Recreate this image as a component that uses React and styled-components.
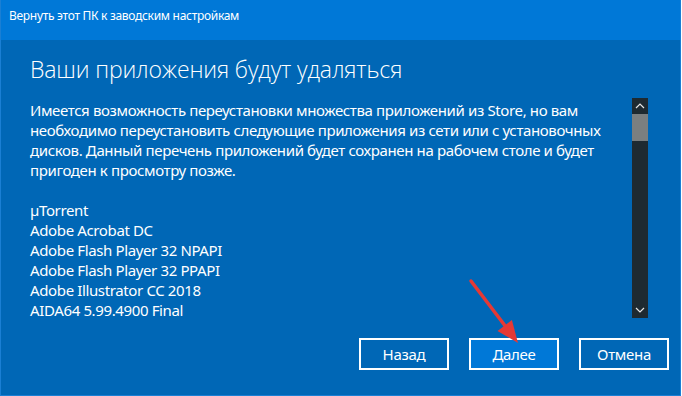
import React from 'react';
import styled, {createGlobalStyle} from 'styled-components';

const GlobalStyle = createGlobalStyle`
  html, body {
    margin: 0;
    padding: 0;
    background: #ffffff;
  }
  body {
    font-family: "Noto Sans", "Open Sans", sans-serif;
  }
`

const APPS = [
  'µTorrent',
  'Adobe Acrobat DC',
  'Adobe Flash Player 32 NPAPI',
  'Adobe Flash Player 32 PPAPI',
  'Adobe Illustrator CC 2018',
  'AIDA64 5.99.4900 Final',
];

const App = () => {
  return (
    <>
      <GlobalStyle/>
      <Window>
        <TitleBar>Вернуть этот ПК к заводским настройкам</TitleBar>
        <Body>
          <Heading>Ваши приложения будут удаляться</Heading>
          <ContentRow>
            <TextArea>
              <Paragraph>
                Имеется возможность переустановки множества приложений из Store, но вам
                необходимо переустановить следующие приложения из сети или с установочных
                дисков. Данный перечень приложений будет сохранен на рабочем столе и будет
                пригоден к просмотру позже.
              </Paragraph>
              <AppList>
                {APPS.map(name => <AppItem key={name}>{name}</AppItem>)}
              </AppList>
            </TextArea>
            <Scrollbar>
              <ScrollArrow>
                <svg width="10" height="6" viewBox="0 0 10 6">
                  <path d="M1 5 L5 1 L9 5" fill="none" stroke="#e6e6e6" strokeWidth="1.2"/>
                </svg>
              </ScrollArrow>
              <ScrollThumb/>
              <ScrollTrack/>
              <ScrollArrow>
                <svg width="10" height="6" viewBox="0 0 10 6">
                  <path d="M1 1 L5 5 L9 1" fill="none" stroke="#e6e6e6" strokeWidth="1.2"/>
                </svg>
              </ScrollArrow>
            </Scrollbar>
          </ContentRow>
          <Footer>
            <Button>Назад</Button>
            <Button primary>Далее</Button>
            <Button>Отмена</Button>
          </Footer>
          <Pointer width="60" height="70" viewBox="0 0 60 70">
            <line x1="2" y1="1" x2="37" y2="47" stroke="#e53935" strokeWidth="3.5" strokeLinecap="round"/>
            <polygon points="49,63 28.5,50.9 42.9,40.1" fill="#e53935"/>
          </Pointer>
        </Body>
      </Window>
    </>
  );
};

const Window = styled.div`
    width: 681px;
    height: 396px;
    box-sizing: border-box;
    border: 1px solid #1a7fd4;
    border-top: none;
    display: flex;
    flex-direction: column;
    background: #0067b6;
`
const TitleBar = styled.div`
    height: 40px;
    flex: 0 0 40px;
    box-sizing: border-box;
    background: #0078d7;
    color: #ffffff;
    font-size: 12px;
    line-height: 16px;
    padding: 8px 8px 0;
    letter-spacing: -0.3px;
`
const Body = styled.div`
    position: relative;
    flex: 1;
    display: flex;
    flex-direction: column;
    padding: 12px 11px 0 29px;
`
const Heading = styled.h1`
    margin: 0;
    font-family: "Open Sans", "Noto Sans", sans-serif;
    font-weight: 300;
    font-size: 23px;
    line-height: 34px;
    color: #ffffff;
    letter-spacing: -0.15px;
`
const ContentRow = styled.div`
    display: flex;
    gap: 20px;
    margin-top: 12px;
    padding-right: 21px;
    height: 220px;
`
const TextArea = styled.div`
    flex: 1;
    padding-top: 2px;
    color: #ffffff;
    font-size: 15px;
    line-height: 20px;
    letter-spacing: -0.37px;
`
const Paragraph = styled.p`
    margin: 0 0 20px;
`
const AppList = styled.div`
    display: flex;
    flex-direction: column;
`
const AppItem = styled.div`
    line-height: 20px;
`
const Scrollbar = styled.div`
    width: 16px;
    flex: 0 0 16px;
    display: flex;
    flex-direction: column;
    background: #1e2a31;
`
const ScrollArrow = styled.div`
    height: 16px;
    flex: 0 0 16px;
    display: flex;
    align-items: center;
    justify-content: center;
`
const ScrollThumb = styled.div`
    height: 27px;
    flex: 0 0 27px;
    background: #7b7f80;
`
const ScrollTrack = styled.div`
    flex: 1;
`
const Footer = styled.div`
    display: flex;
    justify-content: flex-end;
    gap: 20px;
    margin-top: 20px;
`
const Button = styled.button`
    width: 90px;
    height: 32px;
    box-sizing: border-box;
    border: 2px solid #ffffff;
    background: ${p => p.primary ? '#0078d7' : 'transparent'};
    color: #ffffff;
    font-family: "Noto Sans", "Open Sans", sans-serif;
    font-size: 15px;
    letter-spacing: -0.3px;
    padding: 0;
    cursor: pointer;
`
const Pointer = styled.svg`
    position: absolute;
    left: 468px;
    top: 240px;
    overflow: visible;
`

export default App;
